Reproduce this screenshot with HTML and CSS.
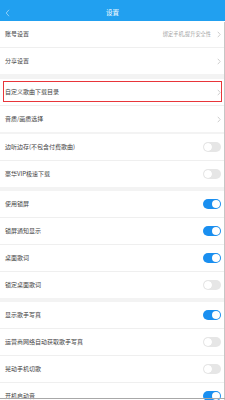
FILE: index.html
```html
<!DOCTYPE html>
<html lang="zh">
<head>
<meta charset="utf-8">
<title>设置</title>
<link rel="stylesheet" href="styles.css">
</head>
<body>
<div class="screen">
  <header class="topbar">
    <svg class="back" width="5" height="8" viewBox="0 0 5 8"><polyline points="4,0.8 1.2,4 4,7.2" fill="none" stroke="#a9d9f8" stroke-width="0.8"/></svg>
    <span class="title">设置</span>
  </header>
  <div class="list">
    <div class="group gap5">
      <div class="row"><span class="label">账号设置</span><span class="hint">绑定手机,提升安全性</span><svg class="chev" width="4" height="7" viewBox="0 0 4 7"><polyline points="0.8,0.8 3.2,3.5 0.8,6.2" fill="none" stroke="#c4c4c4" stroke-width="0.8"/></svg></div>
      <div class="row"><span class="label">分享设置</span><svg class="chev" width="4" height="7" viewBox="0 0 4 7"><polyline points="0.8,0.8 3.2,3.5 0.8,6.2" fill="none" stroke="#c4c4c4" stroke-width="0.8"/></svg></div>
    </div>
    <div class="group gap2">
      <div class="row marked"><span class="label">自定义歌曲下载目录</span><svg class="chev" width="4" height="7" viewBox="0 0 4 7"><polyline points="0.8,0.8 3.2,3.5 0.8,6.2" fill="none" stroke="#c4c4c4" stroke-width="0.8"/></svg><span class="redbox"></span></div>
      <div class="row"><span class="label">音质/画质选择</span><svg class="chev" width="4" height="7" viewBox="0 0 4 7"><polyline points="0.8,0.8 3.2,3.5 0.8,6.2" fill="none" stroke="#c4c4c4" stroke-width="0.8"/></svg></div>
    </div>
    <div class="group gap4">
      <div class="row"><span class="label">边听边存(不包含付费歌曲)</span><span class="toggle"><span class="knob"></span></span></div>
      <div class="row"><span class="label">豪华VIP极速下载</span><span class="toggle"><span class="knob"></span></span></div>
    </div>
    <div class="group gap4">
      <div class="row"><span class="label">使用锁屏</span><span class="toggle on"><span class="knob"></span></span></div>
      <div class="row"><span class="label">锁屏通知显示</span><span class="toggle on"><span class="knob"></span></span></div>
      <div class="row"><span class="label">桌面歌词</span><span class="toggle on"><span class="knob"></span></span></div>
      <div class="row"><span class="label">锁定桌面歌词</span><span class="toggle"><span class="knob"></span></span></div>
    </div>
    <div class="group">
      <div class="row"><span class="label">显示歌手写真</span><span class="toggle on"><span class="knob"></span></span></div>
      <div class="row"><span class="label">运营商网络自动获取歌手写真</span><span class="toggle"><span class="knob"></span></span></div>
      <div class="row"><span class="label">晃动手机切歌</span><span class="toggle"><span class="knob"></span></span></div>
      <div class="row"><span class="label">开机启动音</span><span class="toggle on"><span class="knob"></span></span></div>
    </div>
  </div>
  <div class="scrollbar"></div>
  <div class="bottomline"></div>
</div>
</body>
</html>
```
FILE: styles.css
```css
* { box-sizing: border-box; }
html, body { margin: 0; padding: 0; }
body {
  font-family: "Noto Sans CJK SC", "Noto Sans", sans-serif;
  background: #ffffff;
}
.screen {
  position: relative;
  width: 225px;
  height: 400px;
  overflow: hidden;
  background: #f3f3f3;
}
.topbar {
  height: 21px;
  background: #21a0f0;
  display: flex;
  align-items: center;
  justify-content: center;
  padding-top: 3px;
  position: relative;
}
.back {
  position: absolute;
  left: 5px;
  top: 9px;
}
.title {
  color: #ffffff;
  font-size: 6.5px;
  line-height: 8px;
}
.list {
  display: flex;
  flex-direction: column;
}
.group {
  background: #ffffff;
  display: flex;
  flex-direction: column;
}
.gap5 { margin-bottom: 5px; }
.gap4 { margin-bottom: 4px; }
.gap2 { margin-bottom: 2px; }
.row {
  height: 26px;
  display: flex;
  align-items: center;
  padding: 0 4px 0 5px;
  position: relative;
}
.row + .row {
  height: 27px;
  border-top: 1px solid #efefef;
}
.label {
  flex: 1;
  font-size: 6px;
  line-height: 8px;
  color: #444444;
  white-space: nowrap;
}
.hint {
  font-size: 5.2px;
  line-height: 8px;
  color: #a0a0a0;
  margin-right: 6px;
  white-space: nowrap;
}
.chev {
  display: block;
}
.redbox {
  position: absolute;
  left: 3px;
  right: 3px;
  top: 2px;
  height: 21px;
  border: 1px solid #e8353a;
}
.toggle {
  width: 18px;
  height: 10px;
  border-radius: 5px;
  background: #e6e6e6;
  display: flex;
  align-items: center;
  justify-content: flex-start;
  padding: 1px;
}
.toggle .knob {
  width: 8px;
  height: 8px;
  border-radius: 50%;
  background: #ffffff;
  box-shadow: 0 0 0.5px rgba(0,0,0,0.15);
}
.toggle.on {
  background: #1a8ff0;
  justify-content: flex-end;
}
.scrollbar {
  position: absolute;
  right: 0;
  top: 22px;
  bottom: 0;
  width: 1px;
  background: #c6c6c6;
}
.bottomline {
  position: absolute;
  left: 0;
  right: 0;
  top: 398px;
  height: 1px;
  background: #a8a8a8;
}
```
